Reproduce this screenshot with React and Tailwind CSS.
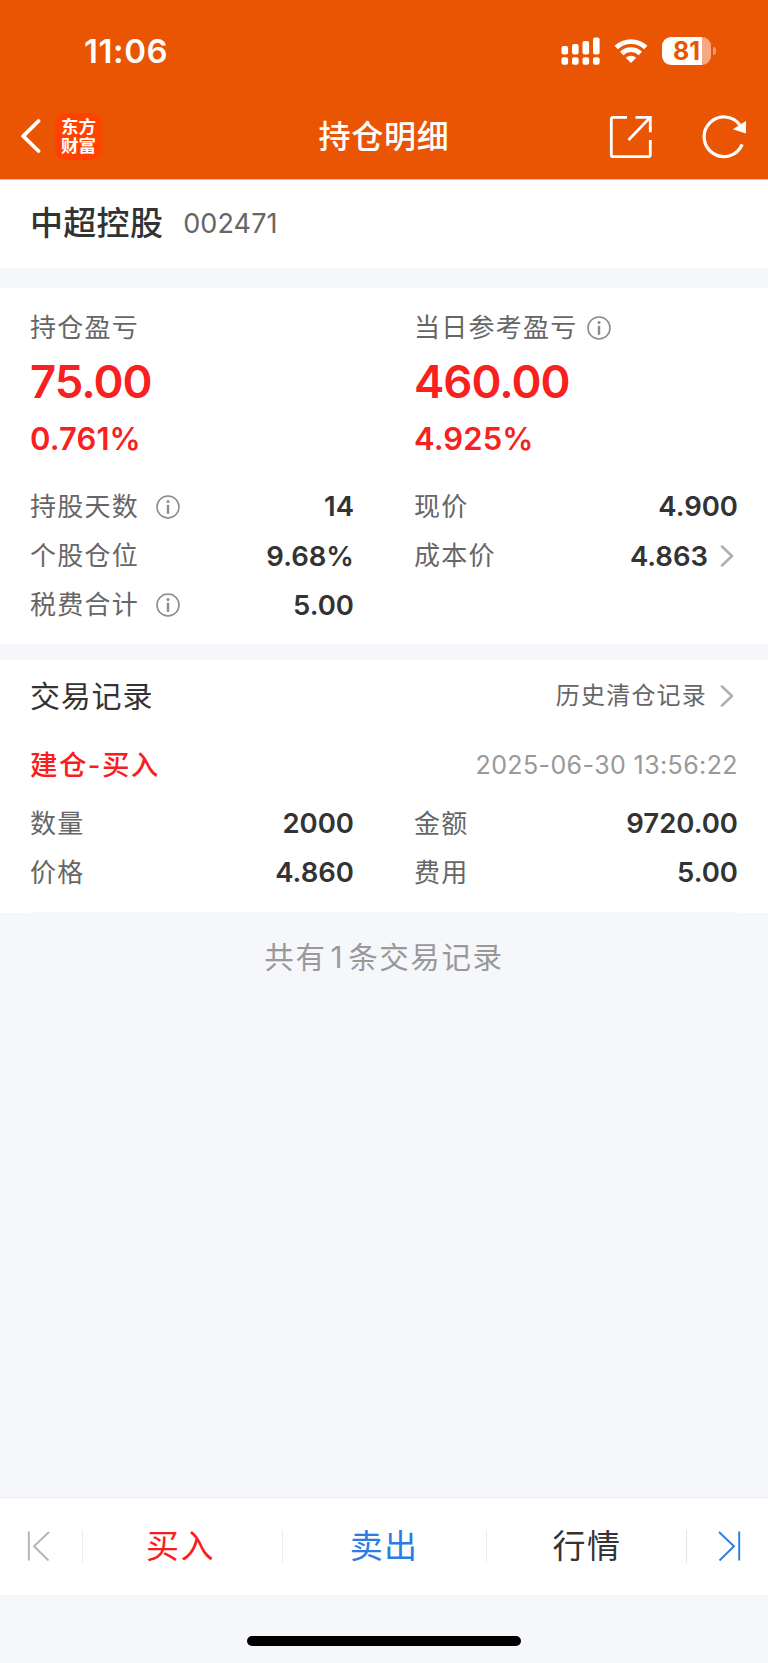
import clsx from 'clsx';

const summary = [
  { label: '持仓盈亏', amount: '75.00', percent: '0.761%' },
  { label: '当日参考盈亏', amount: '460.00', percent: '4.925%', info: true },
];

const details = [
  { label: '持股天数', value: '14', info: true },
  { label: '现价', value: '4.900' },
  { label: '个股仓位', value: '9.68%' },
  { label: '成本价', value: '4.863', link: true },
  { label: '税费合计', value: '5.00', info: true },
];

const record = [
  { label: '数量', value: '2000' },
  { label: '金额', value: '9720.00' },
  { label: '价格', value: '4.860' },
  { label: '费用', value: '5.00' },
];

const InfoIcon = ({ className }) => (
  <svg viewBox="0 0 24 24" className={clsx('w-6 h-6 shrink-0', className)} fill="none" stroke="#8c8c8c">
    <circle cx="12" cy="12" r="11" strokeWidth="1.6" />
    <path d="M12 9.8v9" strokeWidth="2.4" />
    <circle cx="12" cy="6.4" r="1.5" fill="#8c8c8c" stroke="none" />
  </svg>
);

const Chevron = () => (
  <svg viewBox="0 0 14 22" className="w-3.5 h-[22px] shrink-0" fill="none" stroke="#b0b0b0" strokeWidth="2.6" strokeLinecap="round" strokeLinejoin="round">
    <path d="M2 1.5l10 9.5-10 9.5" />
  </svg>
);

const Field = ({ label, value, info, link }) => (
  <div className="flex items-center justify-between h-[49.2px]">
    <div className="flex items-center">
      <span className="text-[26px] tracking-[1.25px] text-[#666]">{label}</span>
      {info && <InfoIcon className="ml-[17px] mb-px" />}
    </div>
    <div className="flex items-center">
      <span className="text-[27.5px] font-semibold text-[#333]">{value}</span>
      {link && <div className="ml-3 mr-1 mb-px"><Chevron /></div>}
    </div>
  </div>
);

const StatusBar = () => (
  <div className="flex items-center justify-between h-[103px] pl-[84px] pr-[52px]">
    <span className="text-[33px] font-semibold tracking-[0.6px]">11:06</span>
    <div className="flex items-center pb-px">
      <svg viewBox="0 0 39 28" className="w-[39px] h-7" fill="currentColor">
        <rect x="0.5" y="9" width="6.6" height="8.4" rx="2" />
        <rect x="11" y="7" width="6.6" height="10.4" rx="2" />
        <rect x="21.5" y="4" width="6.6" height="13.4" rx="2" />
        <rect x="32" y="0.5" width="6.6" height="16.9" rx="2" />
        <rect x="0.5" y="20.2" width="6.6" height="7.6" rx="2" />
        <rect x="11" y="20.2" width="6.6" height="7.6" rx="2" />
        <rect x="21.5" y="20.2" width="6.6" height="7.6" rx="2" />
        <rect x="32" y="20.2" width="6.6" height="7.6" rx="2" />
      </svg>
      <svg viewBox="0 0 34 26" className="w-[34px] h-[26px] ml-[14px]" fill="none" stroke="currentColor" strokeWidth="4.8">
        <path d="M2.2 9.6a21.3 21.3 0 0 1 29.6 0" />
        <path d="M7.7 15.5a13.3 13.3 0 0 1 18.6 0" />
        <path d="M17 25l-5.2-5.2a7.4 7.4 0 0 1 10.4 0z" fill="currentColor" stroke="none" />
      </svg>
      <div className="flex items-center ml-[14px]">
        <div className="flex items-center justify-center w-[49px] h-7 rounded-[9px] overflow-hidden bg-linear-to-r from-white from-[82%] to-[#f6aa82] to-[82%]">
          <span className="pt-px text-[25px] font-bold text-[#ea5504]">81</span>
        </div>
        <div className="w-[3px] h-2 ml-[2px] rounded-r-full bg-[#f2996b]"></div>
      </div>
    </div>
  </div>
);

const TitleBar = () => (
  <div className="grid grid-cols-[1fr_auto_1fr] items-center h-[66px] pl-[21px] pr-[21px]">
    <div className="flex items-center">
      <svg viewBox="0 0 20 36" className="w-5 h-9" fill="none" stroke="currentColor" strokeWidth="3.8" strokeLinecap="round" strokeLinejoin="round">
        <path d="M17.5 3L2.2 18.2 17.5 33" />
      </svg>
      <div className="flex flex-col items-center justify-center w-[47px] h-[47px] ml-[14px] rounded-[10px] bg-[#ff4200] text-[17.5px] leading-[19px] font-bold">
        <span>东方</span>
        <span>财富</span>
      </div>
    </div>
    <h1 className="pt-0.5 text-[32px] font-medium tracking-[0.8px]">持仓明细</h1>
    <div className="flex items-center justify-end pt-px">
      <svg viewBox="0 0 44 44" className="w-11 h-11" fill="none" stroke="currentColor" strokeWidth="2.8">
        <path d="M18 2.3H4.3a2 2 0 0 0-2 2v35.4a2 2 0 0 0 2 2h35a2 2 0 0 0 2-2V25" />
        <path d="M26.5 2.3h14.8v15M41 2.6L19.5 25" />
      </svg>
      <svg viewBox="0 0 46 46" className="w-[46px] h-[46px] ml-[48px]" fill="none" stroke="currentColor" strokeWidth="3.2">
        <path d="M41.2 30.4A19.8 19.8 0 1 1 39 11.2" />
        <path d="M45 7v12.6L31.8 15.2z" fill="currentColor" stroke="none" />
      </svg>
    </div>
  </div>
);

const ToolBar = () => (
  <nav className="flex items-center h-[98.5px] bg-white border-t border-[#eee] text-[33px] text-center">
    <button className="flex w-[82px] pl-[26px]">
      <svg viewBox="0 0 24 32" className="w-6 h-8" fill="none" stroke="#b4b4b4" strokeWidth="1.9">
        <path d="M2.8 1.5v29M23 2L8 16.3 22.5 30.5" />
      </svg>
    </button>
    <button className="w-[200px] h-[33px] border-l border-[#ececec] pr-1 tracking-[1.5px] text-[#fb1d1d]">买入</button>
    <button className="w-[204px] h-[33px] border-l border-[#ececec] pr-px tracking-[1.2px] text-[#2b7de3]">卖出</button>
    <button className="w-[200px] h-[33px] border-l border-[#ececec] pl-px tracking-[1.5px] text-[#333]">行情</button>
    <button className="flex flex-1 h-[33px] items-center border-l border-[#e4e4e4] pl-[31px]">
      <svg viewBox="0 0 24 32" className="w-6 h-8" fill="none" stroke="#2b7de3" strokeWidth="1.9">
        <path d="M21.2 1.5v29M1 2l15 14.3L1.5 30.5" />
      </svg>
    </button>
  </nav>
);

export default function App() {
  return (
    <div className="flex flex-col w-[768px] h-[1663px] overflow-hidden bg-[#f6f7fa] font-['Inter','Noto_Sans_CJK_SC',sans-serif] leading-none whitespace-nowrap">
      <header className="h-[180px] border-b border-[#f8bd9b] bg-[#ea5504] text-white">
        <StatusBar />
        <TitleBar />
      </header>

      {/* stock name */}
      <section className="flex items-center h-[88px] px-[30px] pb-0.5 bg-white">
        <span className="text-[33px] font-medium tracking-[0.3px] text-[#333]">中超控股</span>
        <span className="ml-5 text-[27px] tracking-[0.1px] text-[#666]">002471</span>
      </section>

      {/* profit and holding */}
      <section className="h-[356px] mt-5 px-[30px] pt-[20px] bg-white">
        <div className="grid grid-cols-2 gap-x-[60px] text-[#f92020]">
          {summary.map(item => (
            <div key={item.label}>
              <div className="flex items-center h-10">
                <span className="text-[26px] tracking-[1.25px] text-[#666]">{item.label}</span>
                {item.info && <InfoIcon className="ml-[9px] mb-px" />}
              </div>
              <div className="flex items-center h-[68px] text-[45.5px] font-semibold tracking-[-1px]">{item.amount}</div>
              <div className="flex items-center h-[45px] text-[31px] font-semibold tracking-[0.1px]">{item.percent}</div>
            </div>
          ))}
        </div>
        <div className="grid grid-cols-2 gap-x-[60px] mt-[21.5px]">
          {details.map(item => <Field key={item.label} {...item} />)}
        </div>
      </section>

      {/* trade records */}
      <section className="h-[253px] mt-4 px-[30px] bg-white">
        <div className="flex items-center justify-between h-[72px]">
          <h2 className="text-[30px] tracking-[0.8px] text-[#333]">交易记录</h2>
          <div className="flex items-center pr-1">
            <span className="mr-[13px] text-[24px] tracking-[1.2px] text-[#666]">历史清仓记录</span>
            <Chevron />
          </div>
        </div>
        <div className="flex items-center justify-between h-[67px]">
          <span className="text-[27.5px] font-medium tracking-[1.4px] text-[#fb1d1d]">建仓-买入</span>
          <span className="text-[25px] tracking-[0.4px] text-[#999]">2025-06-30 13:56:22</span>
        </div>
        <div className="grid grid-cols-2 gap-x-[60px]">
          {record.map(item => <Field key={item.label} {...item} />)}
        </div>
        <div className="h-px mt-[14.6px] bg-[#f4f5f7]"></div>
      </section>
      <p className="mt-[30px] text-center text-[29.5px] tracking-[1.6px] text-[#999]">共有<span className="mx-1">1</span>条交易记录</p>

      <div className="mt-auto">
        <ToolBar />
        <div className="h-[68px] pt-[41px]">
          <div className="w-[274px] h-2.5 mx-auto rounded-full bg-black"></div>
        </div>
      </div>
    </div>
  );
}
